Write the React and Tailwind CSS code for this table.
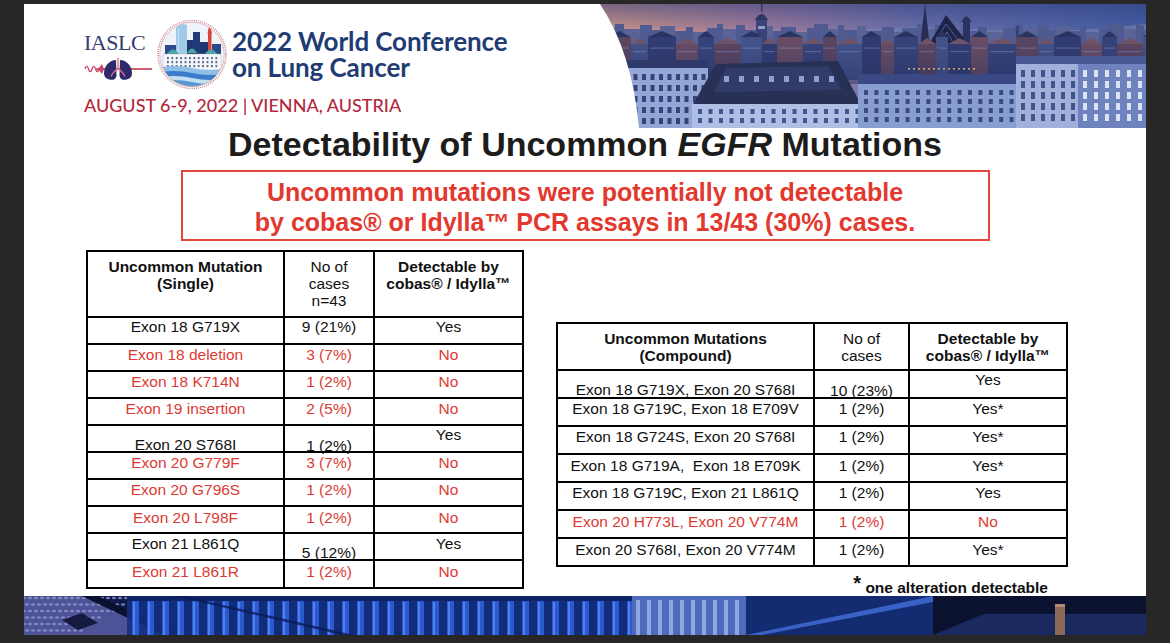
import React from "react";

function LungsIcon() {
  return (
    <svg width="68" height="22" viewBox="0 0 68 22" className="mt-[4px] block">
      <path d="M12 11 H68" stroke="#c3283f" strokeWidth="1.4" />
      <path d="M1 11 c1 -3.5 2.5 -3.5 3.5 0 c1 3.5 2.5 3.5 3.5 0 c1 -3.5 2.5 -3.5 3.5 0 c1 3.5 2.5 3.5 3.5 0" stroke="#c9476a" strokeWidth="1.3" fill="none" />
      <path d="M14 11 L18 6 L20 11 L18 16 Z" fill="#c9476a" />
      <path d="M32 2 C25.5 2 20 8.5 20 15 C20 19.5 23 21.8 28 21.8 C31 21.8 32.5 19.5 32.5 17 Z" fill="#2c2a6b" />
      <path d="M36 2 C42.5 2 48 8.5 48 15 C48 19.5 45 21.8 40 21.8 C37 21.8 35.5 19.5 35.5 17 Z" fill="#2c2a6b" />
      <path d="M34 0 V10 M34 10 L29 15 M34 10 L39 15 M29 15 L27 18.5 M39 15 L41 18.5" stroke="#e36a86" strokeWidth="1.4" fill="none" />
    </svg>
  );
}

function CityCircle() {
  const win = [];
  for (let r = 0; r < 3; r++)
    for (let c = 0; c < 12; c++)
      win.push(
        <rect key={r + "-" + c} x={10 + c * 4.4} y={38 + r * 4} width="1.8" height="2.2" fill="#5a6a8a" />
      );
  return (
    <svg width="70" height="71" viewBox="0 0 70 71" className="block shrink-0">
      <defs>
        <clipPath id="cc">
          <circle cx="35" cy="35.5" r="32" />
        </clipPath>
      </defs>
      <circle cx="35" cy="35.5" r="34" fill="#fff" stroke="#cf8c93" strokeWidth="1.6" strokeDasharray="1 1.1" />
      <g clipPath="url(#cc)">
        <rect width="70" height="71" fill="#eef3f9" />
        <polygon points="19,40 19,9 23,4 30,6 30,40" fill="#9fcbe8" />
        <rect x="21" y="10" width="1" height="28" fill="#c8e2f4" />
        <rect x="8" y="26" width="11" height="14" fill="#2b4b8c" />
        <rect x="30" y="21" width="6" height="19" fill="#1f3670" />
        <rect x="36" y="13" width="7" height="27" fill="#213a7a" />
        <rect x="43" y="23" width="8" height="17" fill="#1f3670" />
        <rect x="51" y="15" width="3.5" height="25" fill="#d9443a" />
        <polygon points="50.5,15 52.7,3 55,15" fill="#d9443a" />
        <rect x="55" y="25" width="9" height="15" fill="#2a4a8a" />
        <path d="M10 35 Q16 26 22 35 Z" fill="#4aa6a2" />
        <path d="M30 34 Q35 25 40 34 Z" fill="#4aa6a2" />
        <path d="M48 35 Q54 26 60 35 Z" fill="#4aa6a2" />
        <rect x="6" y="35" width="58" height="16" fill="#f6f7fb" stroke="#a8b0c0" strokeWidth="0.4" />
        {win}
        <path d="M0 49 Q17 45 35 49 T70 49 L70 71 L0 71 Z" fill="#8cc0e6" />
        <path d="M0 54 Q17 50 35 54 T70 54 L70 71 L0 71 Z" fill="#3b7cc8" />
        <path d="M0 59 Q17 55 35 59 T70 59 L70 71 L0 71 Z" fill="#c2e0f4" />
        <path d="M0 63 Q17 59 35 63 T70 63 L70 71 L0 71 Z" fill="#5a98d6" />
      </g>
      <circle cx="35" cy="35.5" r="32.3" fill="none" stroke="#d8a7ab" strokeWidth="0.8" />
    </svg>
  );
}

function grid(key, x0, y0, cols, rows, dx, dy, w, h, fill, op) {
  const out = [];
  for (let r = 0; r < rows; r++)
    for (let c = 0; c < cols; c++)
      out.push(
        <rect key={key + r + "-" + c} x={x0 + c * dx} y={y0 + r * dy} width={w} height={h} fill={fill} opacity={op || 1} />
      );
  return out;
}

function CityPhoto() {
  const far = [];
  let x = 0;
  let i = 0;
  while (x < 550) {
    const w = 6 + ((i * 7) % 11);
    const h = 4 + ((i * 13) % 9);
    far.push(<rect key={"f" + i} x={x} y={32 - h} width={w} height={h + 12} fill={i % 3 === 0 ? "#5a6396" : "#4f5a90"} />);
    x += w;
    i++;
  }
  const mid = [];
  x = 0;
  i = 0;
  while (x < 550) {
    const w = 12 + ((i * 11) % 17);
    const h = 6 + ((i * 7) % 14);
    const colors = ["#36437a", "#5a4560", "#42528a", "#313c72", "#664c64"];
    mid.push(<rect key={"m" + i} x={x} y={46 - h} width={w} height={h + 30} fill={colors[i % 5]} />);
    mid.push(<polygon key={"mr" + i} points={`${x},${46 - h} ${x + w / 2},${40 - h} ${x + w},${46 - h}`} fill={i % 2 ? "#2a3462" : "#6e5266"} />);
    mid.push(<rect key={"mw" + i} x={x + 2} y={50 - h / 2} width={w - 4} height="1.2" fill="#8190c4" opacity="0.5" />);
    x += w;
    i++;
  }
  return (
    <svg width="550" height="124" viewBox="0 0 550 124" className="block shrink-0">
      <defs>
        <linearGradient id="sky" x1="0" y1="0" x2="1" y2="0">
          <stop offset="0" stopColor="#d49a86" />
          <stop offset="0.3" stopColor="#a6809e" />
          <stop offset="0.6" stopColor="#6a72ad" />
          <stop offset="1" stopColor="#4560a6" />
        </linearGradient>
        <linearGradient id="skyTop" x1="0" y1="0" x2="0" y2="1">
          <stop offset="0" stopColor="#2c3a7a" stopOpacity="0.55" />
          <stop offset="1" stopColor="#2c3a7a" stopOpacity="0" />
        </linearGradient>
        <linearGradient id="fade" x1="0" y1="0" x2="0" y2="1">
          <stop offset="0" stopColor="#1d2758" stopOpacity="0" />
          <stop offset="1" stopColor="#1d2758" stopOpacity="0.4" />
        </linearGradient>
      </defs>
      <rect width="550" height="124" fill="url(#sky)" />
      <rect width="550" height="30" fill="url(#skyTop)" />
      <path d="M230 30 Q300 19 380 25 T550 20 L550 40 L230 40 Z" fill="#6e79ae" opacity="0.8" />
      {far}
      <rect x="160" y="14" width="11" height="34" fill="#3a4478" />
      <path d="M159 16 Q165.5 4 172 16 Z" fill="#2e375f" />
      <rect x="165" y="0" width="1.4" height="8" fill="#2e375f" />
      <rect x="162" y="22" width="7" height="3" fill="#8e9cc8" />
      <polygon points="324,44 329,0 334,44" fill="#262c52" />
      <polygon points="332,42 350,11 374,42" fill="#1e2448" />
      <path d="M340 36 L350 20 L362 36 M344 40 L351 28 L358 40" stroke="#5a6aa6" strokeWidth="0.8" fill="none" />
      <rect x="367" y="16" width="7" height="28" fill="#2a3262" />
      <path d="M365.5 18 Q370.5 7 375.5 18 Z" fill="#2a3262" />
      <rect x="420" y="22" width="3" height="20" fill="#37427a" />
      {mid}
      <rect y="40" width="550" height="40" fill="url(#fade)" />
      {grid("lit", 312, 64, 14, 2, 5, 6, 2, 1.6, "#e8b878", 0.85)}
      {grid("lit2", 470, 58, 8, 1, 6, 6, 2, 1.6, "#d9a874", 0.8)}
      <rect x="6" y="56" width="106" height="10" fill="#2f3a6a" />
      <rect x="6" y="64" width="106" height="60" fill="#93a6d6" />
      {grid("lb", 12, 70, 12, 5, 8.5, 11, 4, 6, "#34447a")}
      <polygon points="96,102 120,60 242,57 266,102" fill="#283056" />
      <polygon points="130,64 232,62 246,86 118,88" fill="#323c68" />
      {grid("dm", 128, 72, 8, 1, 15, 0, 5, 6, "#8e9fd0")}
      <rect x="96" y="100" width="172" height="24" fill="#aebfe6" />
      {grid("fb", 102, 105, 16, 2, 10.5, 9, 4, 5, "#45558e")}
      <rect x="262" y="70" width="160" height="12" fill="#3a4884" />
      <rect x="262" y="80" width="160" height="44" fill="#889dd0" />
      {grid("mb", 268, 86, 15, 4, 10.4, 9, 4, 5, "#3a4a84")}
      <rect x="420" y="52" width="130" height="10" fill="#485892" />
      <rect x="420" y="60" width="62" height="64" fill="#a0b0da" />
      <rect x="482" y="60" width="68" height="64" fill="#6e82bd" />
      {grid("rb", 425, 66, 6, 5, 10, 11, 4, 7, "#43548c")}
      {grid("rb2", 487, 66, 6, 5, 11, 11, 4, 7, "#dce4f4")}
      <path d="M0 0 L4 0 Q36 48 43 124 L0 124 Z" fill="#ffffff" />
    </svg>
  );
}

function BottomStrip() {
  const cols = [];
  for (let x = 108; x < 605; x += 15) {
    cols.push(<rect key={"c" + x} x={x} y="4" width="7" height="35" fill="#2b5ad0" />);
    cols.push(<rect key={"h" + x} x={x + 1} y="6" width="2" height="33" fill="#4f80ee" />);
  }
  const dots = [];
  for (let r = 0; r < 6; r++)
    for (let c = 0; c < 18; c++) {
      const dx = c * 6 + (r % 2) * 3;
      const dy = r * 6.5 + 2;
      if (dx < 115 - dy * 1.6) dots.push(<ellipse key={"d" + r + c} cx={dx} cy={dy} rx="2.2" ry="1.3" fill="#8d93cc" opacity="0.8" />);
    }
  return (
    <svg width="1122" height="39" viewBox="0 0 1122 39" className="block shrink-0 mt-auto">
      <rect width="1122" height="39" fill="#0d1a45" />
      <polygon points="0,0 58,0 140,39 0,39" fill="#4e5398" />
      {dots}
      <polygon points="38,24 58,17 74,27 54,34" fill="#151a3e" />
      <polygon points="58,0 74,0 156,39 140,39" fill="#0a1030" />
      <rect x="103" y="0" width="505" height="39" fill="#12307f" opacity="0.9" />
      {cols}
      <rect x="103" y="0" width="505" height="5" fill="#0e2466" />
      <polygon points="150,0 160,0 330,39 318,39" fill="#0b1c55" opacity="0.8" />
      <rect x="608" y="0" width="114" height="39" fill="#4d6abb" />
      {grid("lg", 612, 4, 10, 1, 11, 0, 4, 35, "#8ea6e2")}
      <rect x="722" y="0" width="187" height="39" fill="#132b70" />
      <polygon points="722,39 738,39 909,6 909,0" fill="#3a62c6" />
      <rect x="909" y="0" width="213" height="39" fill="#0b1230" />
      <polygon points="909,39 960,18 1122,18 1122,39" fill="#1a2a60" />
      <rect x="1031" y="8" width="10" height="31" fill="#8d6a58" />
      <rect x="1031" y="8" width="10" height="3" fill="#b48a70" />
    </svg>
  );
}

const leftRows = [
  { m: "Exon 18 G719X", n: "9 (21%)", d: "Yes", red: false, p: ["pt-0", "pt-0", "pt-0"] },
  { m: "Exon 18 deletion", n: "3 (7%)", d: "No", red: true, p: ["pt-px", "pt-px", "pt-px"] },
  { m: "Exon 18 K714N", n: "1 (2%)", d: "No", red: true, p: ["pt-px", "pt-px", "pt-px"] },
  { m: "Exon 19 insertion", n: "2 (5%)", d: "No", red: true, p: ["pt-px", "pt-px", "pt-px"] },
  { m: "Exon 20 S768I", n: "1 (2%)", d: "Yes", red: false, p: ["pt-[10px]", "pt-[11px]", "pt-0"] },
  { m: "Exon 20 G779F", n: "3 (7%)", d: "No", red: true, p: ["pt-px", "pt-px", "pt-px"] },
  { m: "Exon 20 G796S", n: "1 (2%)", d: "No", red: true, p: ["pt-px", "pt-px", "pt-px"] },
  { m: "Exon 20 L798F", n: "1 (2%)", d: "No", red: true, p: ["pt-[2px]", "pt-[2px]", "pt-[2px]"] },
  { m: "Exon 21 L861Q", n: "5 (12%)", d: "Yes", red: false, p: ["pt-px", "pt-[10px]", "pt-px"] },
  { m: "Exon 21 L861R", n: "1 (2%)", d: "No", red: true, p: ["pt-[2px]", "pt-[2px]", "pt-[2px]"] },
];

const rightRows = [
  { m: "Exon 18 G719X, Exon 20 S768I", n: "10 (23%)", d: "Yes", red: false, p: ["pt-[10px]", "pt-[11px]", "pt-0"] },
  { m: "Exon 18 G719C, Exon 18 E709V", n: "1 (2%)", d: "Yes*", red: false, p: ["pt-px", "pt-px", "pt-px"] },
  { m: "Exon 18 G724S, Exon 20 S768I", n: "1 (2%)", d: "Yes*", red: false, p: ["pt-px", "pt-px", "pt-px"] },
  { m: "Exon 18 G719A,\u00a0 Exon 18 E709K", n: "1 (2%)", d: "Yes*", red: false, p: ["pt-[2px]", "pt-[2px]", "pt-[2px]"] },
  { m: "Exon 18 G719C, Exon 21 L861Q", n: "1 (2%)", d: "Yes", red: false, p: ["pt-px", "pt-px", "pt-px"] },
  { m: "Exon 20 H773L, Exon 20 V774M", n: "1 (2%)", d: "No", red: true, p: ["pt-[2px]", "pt-[2px]", "pt-[2px]"] },
  { m: "Exon 20 S768I, Exon 20 V774M", n: "1 (2%)", d: "Yes*", red: false, p: ["pt-[2px]", "pt-[2px]", "pt-[2px]"] },
];

function LeftTable() {
  return (
    <div className="w-[438px] shrink-0 border-2 border-black font-['Liberation_Sans',Arial,sans-serif] text-[15.5px] leading-[17px] text-center text-[#111]">
      <div className="flex h-[66px] border-b-2 border-black">
        <div className="w-[197px] border-r-2 border-black pt-[6px] font-bold">
          Uncommon Mutation
          <br />
          (Single)
        </div>
        <div className="w-[90px] border-r-2 border-black pt-[6px]">
          No of
          <br />
          cases
          <br />
          n=43
        </div>
        <div className="flex-1 pt-[6px] font-bold">
          Detectable by
          <br />
          cobas® / Idylla™
        </div>
      </div>
      {leftRows.map((r, i) => (
        <div
          key={i}
          className={
            (i < leftRows.length - 1 ? "h-[27px] border-b-2 border-black " : "h-[26px] ") +
            "flex " +
            (r.red ? "text-[#dc3b33]" : "")
          }
        >
          <div className={"w-[197px] border-r-2 border-black whitespace-nowrap " + r.p[0]}>{r.m}</div>
          <div className={"w-[90px] border-r-2 border-black whitespace-nowrap " + r.p[1]}>{r.n}</div>
          <div className={"flex-1 whitespace-nowrap " + r.p[2]}>{r.d}</div>
        </div>
      ))}
    </div>
  );
}

function RightTable() {
  return (
    <div className="w-[512px] border-2 border-black font-['Liberation_Sans',Arial,sans-serif] text-[15.5px] leading-[17px] text-center text-[#111]">
      <div className="flex h-[47px] border-b-2 border-black">
        <div className="w-[257px] border-r-2 border-black flex items-center justify-center font-bold">
          <div>
            Uncommon Mutations
            <br />
            (Compound)
          </div>
        </div>
        <div className="w-[95px] border-r-2 border-black flex items-center justify-center">
          <div>
            No of
            <br />
            cases
          </div>
        </div>
        <div className="flex-1 flex items-center justify-center font-bold">
          <div>
            Detectable by
            <br />
            cobas® / Idylla™
          </div>
        </div>
      </div>
      {rightRows.map((r, i) => (
        <div
          key={i}
          className={
            (i < rightRows.length - 1 ? "h-[28px] border-b-2 border-black " : "h-[26px] ") +
            "flex " +
            (r.red ? "text-[#dc3b33]" : "")
          }
        >
          <div className={"w-[257px] border-r-2 border-black whitespace-nowrap " + r.p[0]}>{r.m}</div>
          <div className={"w-[95px] border-r-2 border-black whitespace-nowrap " + r.p[1]}>{r.n}</div>
          <div className={"flex-1 whitespace-nowrap " + r.p[2]}>{r.d}</div>
        </div>
      ))}
    </div>
  );
}

export default function App() {
  return (
    <div className="w-[1170px] h-[643px] bg-[#272727] pt-[4px] pl-[24px] overflow-hidden">
      <div className="w-[1122px] h-[631px] bg-white flex flex-col overflow-hidden">
        <header className="h-[124px] flex shrink-0">
          <div className="pl-[60px] pt-[15px] flex flex-col">
            <div className="flex items-start">
              <div className="w-[73px] flex flex-col shrink-0">
                <div className="mt-[13px] text-[22px] leading-[22px] font-['Liberation_Serif',serif] text-[#33406d] tracking-[-0.5px]">
                  IASLC
                </div>
                <LungsIcon />
              </div>
              <CityCircle />
              <div className="ml-[5px] mt-[9px] font-['Lato',sans-serif] font-bold text-[26px] leading-[26px] text-[#213b73] whitespace-nowrap tracking-[-0.1px]">
                <div>2022 World Conference</div>
                <div>on Lung Cancer</div>
              </div>
            </div>
            <div className="mt-[5px] font-['Lato',sans-serif] font-medium text-[18px] leading-[20px] text-[#b3283c] whitespace-nowrap">
              AUGUST 6-9, 2022 | VIENNA, AUSTRIA
            </div>
          </div>
          <div className="ml-auto">
            <CityPhoto />
          </div>
        </header>

        <h1 className="text-center font-['Liberation_Sans',Arial,sans-serif] font-bold text-[34px] leading-[32px] text-[#1c1c1c] whitespace-nowrap">
          Detectability of Uncommon <i>EGFR</i> Mutations
        </h1>

        <div className="mx-auto mt-[10px] w-[809px] h-[72px] border-2 border-[#e2473c] pt-[5px] text-center font-['Liberation_Sans',Arial,sans-serif] font-bold text-[25px] leading-[30px] text-[#e2382e] whitespace-nowrap">
          <div>Uncommon mutations were potentially not detectable</div>
          <div>by cobas® or Idylla™ PCR assays in 13/43 (30%) cases.</div>
        </div>

        <div className="mt-[9px] pl-[62px] flex items-start">
          <LeftTable />
          <div className="ml-[32px] mt-[72px] flex flex-col">
            <RightTable />
            <div className="mt-[11px] pr-[20px] text-right font-['Liberation_Sans',Arial,sans-serif] font-bold text-[15.5px] leading-[17px] text-[#111] whitespace-nowrap">
              <span className="relative top-[-3px] text-[20px]">*</span> one alteration detectable
            </div>
          </div>
        </div>

        <BottomStrip />
      </div>
    </div>
  );
}
